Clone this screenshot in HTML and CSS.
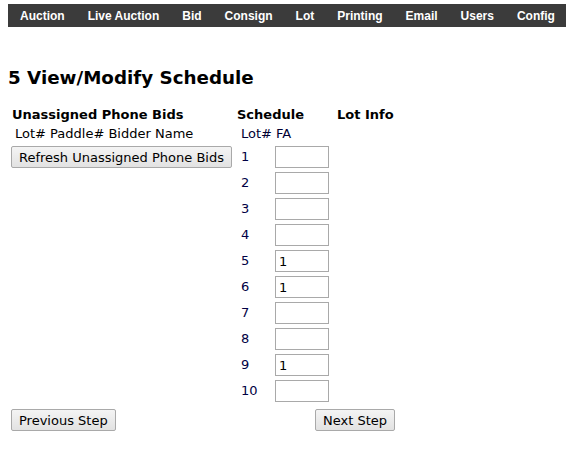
FILE: index.html
```html
<!DOCTYPE html>
<html>
<head>
<meta charset="utf-8">
<link rel="stylesheet" href="styles.css">
</head>
<body>
<nav class="menu">
  <a class="menu-item">Auction</a>
  <a class="menu-item">Live Auction</a>
  <a class="menu-item">Bid</a>
  <a class="menu-item">Consign</a>
  <a class="menu-item">Lot</a>
  <a class="menu-item">Printing</a>
  <a class="menu-item">Email</a>
  <a class="menu-item">Users</a>
  <a class="menu-item">Config</a>
</nav>
<main class="content">
  <h2 class="title">5 View/Modify Schedule</h2>
  <div class="layout">
    <div class="col col-bids">
      <div class="col-head">Unassigned Phone Bids</div>
      <div class="sub-head bids-sub">Lot# Paddle# Bidder Name</div>
      <button class="btn">Refresh Unassigned Phone Bids</button>
    </div>
    <div class="col col-schedule">
      <div class="col-head">Schedule</div>
      <div class="sub-head sched-sub">Lot# FA</div>
      <div class="sched">
        <span class="lot">1</span><input class="fa" type="text" value="">
        <span class="lot">2</span><input class="fa" type="text" value="">
        <span class="lot">3</span><input class="fa" type="text" value="">
        <span class="lot">4</span><input class="fa" type="text" value="">
        <span class="lot">5</span><input class="fa" type="text" value="1">
        <span class="lot">6</span><input class="fa" type="text" value="1">
        <span class="lot">7</span><input class="fa" type="text" value="">
        <span class="lot">8</span><input class="fa" type="text" value="">
        <span class="lot">9</span><input class="fa" type="text" value="1">
        <span class="lot">10</span><input class="fa" type="text" value="">
      </div>
    </div>
    <div class="col col-info">
      <div class="col-head">Lot Info</div>
    </div>
    <div class="steps-left">
      <button class="btn">Previous Step</button>
    </div>
    <div class="steps-right">
      <button class="btn">Next Step</button>
    </div>
  </div>
</main>
</body>
</html>
```
FILE: styles.css
```css
html, body {
  margin: 0;
  padding: 0;
  background: #ffffff;
}
body {
  font-family: "DejaVu Sans", Verdana, sans-serif;
  font-size: 13px;
  color: #000000;
  padding: 4px 0 0 8px;
}
.menu {
  display: flex;
  background: #3b3b3b;
  height: 23px;
  align-items: center;
  padding-left: 0.5px;
  overflow: hidden;
}
.menu-item {
  font-family: "Liberation Sans", Tahoma, sans-serif;
  font-size: 12px;
  font-weight: bold;
  color: #ffffff;
  padding: 0 11.5px;
  white-space: nowrap;
  flex-shrink: 0;
}
.title {
  font-size: 18.3px;
  font-weight: bold;
  margin: 40px 0 0 0;
  line-height: 22px;
}
.layout {
  display: grid;
  grid-template-columns: 226px 100px 80px;
  margin-top: 18px;
  margin-left: 3px;
}
.col-head {
  font-weight: bold;
  line-height: 16px;
}
.col-bids .col-head {
  padding-left: 1px;
}
.sub-head {
  margin-top: 3px;
  line-height: 16px;
}
.bids-sub {
  padding-left: 4px;
}
.sched-sub {
  padding-left: 4px;
  color: #000033;
}
.btn {
  font-family: "DejaVu Sans", Verdana, sans-serif;
  font-size: 13px;
  color: #000000;
  background: linear-gradient(#f4f4f4, #e2e2e2);
  border: 1px solid #a9a9a9;
  border-radius: 2px;
  height: 22px;
  padding: 0 7px;
  margin-top: 4px;
}
.sched {
  display: grid;
  grid-template-columns: 34px 54px;
  row-gap: 4px;
  margin-top: 4px;
  padding-left: 4px;
  align-items: center;
}
.lot {
  color: #000044;
  line-height: 16px;
}
.fa {
  box-sizing: border-box;
  width: 54px;
  height: 22px;
  border: 1px solid #a9a9a9;
  font-family: "DejaVu Sans", Verdana, sans-serif;
  font-size: 13px;
  padding: 0 3px;
  margin: 0;
  color: #000000;
}
.steps-left {
  margin-top: 3px;
}
.steps-right {
  grid-column: 2 / 4;
  margin-top: 3px;
  display: flex;
  justify-content: flex-end;
  padding-right: 22px;
}
```
